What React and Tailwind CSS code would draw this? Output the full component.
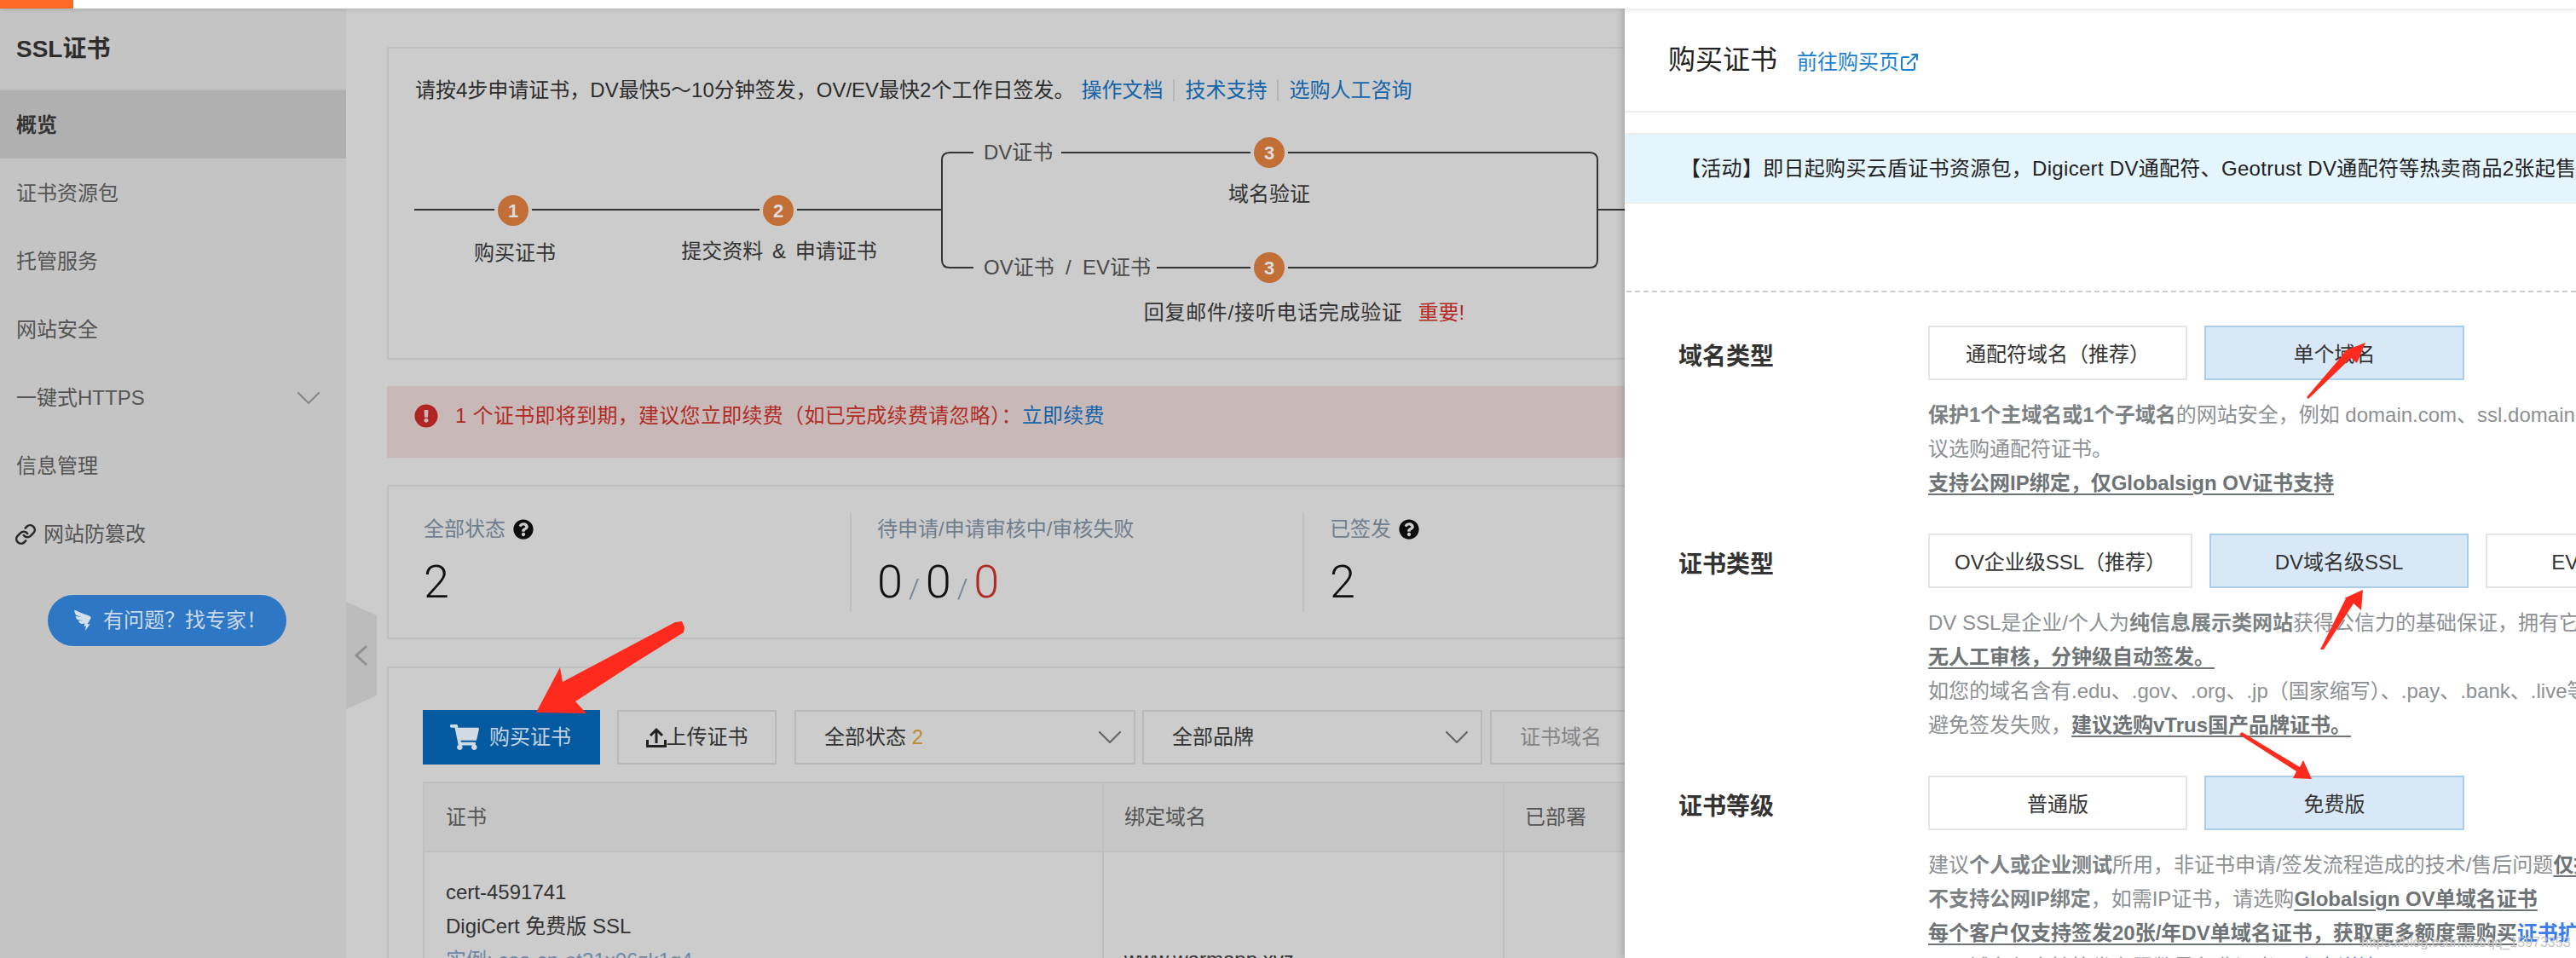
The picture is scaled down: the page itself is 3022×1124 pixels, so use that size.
import React from 'react'
import { ChevronDown, Link as LinkIcon, ExternalLink } from 'lucide-react'
import { FaShoppingCart, FaQuestionCircle, FaExclamationCircle } from 'react-icons/fa'
import { AiOutlineDingding } from 'react-icons/ai'

const font = { fontFamily: '"Liberation Sans", "Noto Sans CJK SC", sans-serif' }
const numFont = { fontFamily: 'Roboto, sans-serif', fontWeight: 300 }

const menu = ['证书资源包', '托管服务', '网站安全']

const Step = ({ n, x, y }) => (
  <div
    className="absolute w-[36px] h-[36px] -ml-[18px] -mt-[18px] rounded-full bg-[#c26f37] text-[#dedede] text-[22px] font-bold flex items-center justify-center ring-4 ring-[#cccccc]"
    style={{ left: x, top: y }}
  >
    {n}
  </div>
)

const Caption = ({ x, y, children }) => (
  <div
    className="absolute whitespace-nowrap text-[#333] leading-[32px] -translate-x-1/2 -translate-y-1/2"
    style={{ left: x, top: y }}
  >
    {children}
  </div>
)

const Option = ({ w = 'w-[304px]', on, children }) => (
  <div
    className={`${w} shrink-0 h-[64px] pt-[4px] border-2 flex items-center justify-center whitespace-nowrap text-[#333] ${
      on ? 'bg-[#d9e8f6] border-[#aacdea]' : 'bg-white border-[#e5e5e5]'
    }`}
  >
    {children}
  </div>
)

const Section = ({ label, options, children }) => (
  <div className="flex">
    <div className="w-[356px] shrink-0 pl-[63px] pt-[10px] h-[64px] flex items-center text-[28px] font-bold text-[#333]">{label}</div>
    <div>
      <div className="flex gap-[20px]">{options}</div>
      <div className="mt-[21px] -mb-[1px] leading-[40px] whitespace-nowrap text-[#8d9093]">{children}</div>
    </div>
  </div>
)

const B = ({ children }) => <span className="font-bold text-[#7c8184]">{children}</span>
const U = ({ children }) => <span className="font-bold text-[#6e7376] underline underline-offset-4">{children}</span>

export default function App() {
  return (
    <div className="relative w-full h-screen overflow-hidden bg-[#cccccc] text-[24px]" style={font}>
      <div className="relative z-30 h-[10px] bg-white shadow-[0_2px_5px_rgba(0,0,0,0.1)]">
        <div className="w-[86px] h-full bg-[#ff6a26]"></div>
      </div>

      <div className="flex h-[1114px]">
        <aside className="relative w-[406px] shrink-0 bg-[#c4c4c4]">
          <div className="h-[96px] pl-[19px] pt-[2px] flex items-center text-[28px] font-semibold text-[#2e2e2e] border-b-2 border-[#bdbdbd]">
            SSL证书
          </div>
          <div className="h-[80px] pl-[19px] pt-[2px] flex items-center bg-[#b0b0b0] font-bold text-[#333]">概览</div>
          {menu.map((m) => (
            <div key={m} className="h-[80px] pl-[19px] pt-[2px] flex items-center text-[#555]">{m}</div>
          ))}
          <div className="h-[80px] pl-[19px] pr-[20px] pt-[2px] flex items-center justify-between text-[#555]">
            一键式HTTPS
            <ChevronDown size={48} strokeWidth={1.1} color="#888888" />
          </div>
          <div className="h-[80px] pl-[19px] pt-[2px] flex items-center text-[#555]">信息管理</div>
          <div className="h-[80px] pl-[17px] pt-[2px] flex items-center text-[#555] gap-[8px]">
            <LinkIcon size={26} strokeWidth={2.4} color="#2a2a2a" />
            网站防篡改
          </div>
          <div className="ml-[56px] mt-[32px] w-[280px] h-[60px] rounded-full bg-[#2e77c4] text-[#c9d9ea] flex items-center pl-[26px] gap-[9px]">
            <AiOutlineDingding size={30} color="#d4e0ec" />
            有问题？找专家！
          </div>

          <svg className="absolute left-[406px] top-[696px]" width="36" height="130" viewBox="0 0 36 130">
            <polygon points="0,0 36,16 36,110 0,126" fill="#bcbcbc" />
            <path d="M24 52 L12 63 L24 74" fill="none" stroke="#8f8f8f" strokeWidth="3" />
          </svg>
        </aside>

        <main className="flex-1 min-w-0 overflow-hidden pl-[48px] pt-[45px]">
          <div className="h-[367px] border-2 border-[#bfbfbf] pl-[31px] pt-[33px]">
            <div className="flex items-center h-[32px] whitespace-nowrap text-[#2c2c2c]">
              请按4步申请证书，DV最快5～10分钟签发，OV/EV最快2个工作日签发。
              <span className="ml-[8px] text-[#1464a8]">操作文档</span>
              <span className="w-[2px] h-[26px] bg-[#b5b5b5] mx-[12px]"></span>
              <span className="text-[#1464a8]">技术支持</span>
              <span className="w-[2px] h-[26px] bg-[#b5b5b5] mx-[12px]"></span>
              <span className="text-[#1464a8]">选购人工咨询</span>
            </div>

            <div className="relative mt-[28px] -ml-[1px] h-[260px] w-[1450px]">
              <svg className="absolute left-0 top-0" width="1450" height="260" viewBox="0 0 1450 260" fill="none" stroke="#333333" strokeWidth="2">
                <path d="M0 96 H619" />
                <path d="M1388 96 H1450" />
                <path d="M628 29 H1379 Q1388 29 1388 38 V155 Q1388 164 1379 164 H628 Q619 164 619 155 V38 Q619 29 628 29 Z" />
              </svg>
              <Step n="1" x={116} y={97} />
              <Step n="2" x={427} y={97} />
              <Step n="3" x={1003} y={29} />
              <Step n="3" x={1003} y={164} />

              <div className="absolute left-[656px] top-[13px] w-[103px] pl-[12px] h-[32px] leading-[32px] bg-[#cccccc] text-[#4a4a4a] whitespace-nowrap">DV证书</div>
              <div className="absolute left-[656px] top-[148px] w-[215px] pl-[12px] h-[32px] leading-[32px] bg-[#cccccc] text-[#4a4a4a] whitespace-nowrap">OV证书&nbsp;&nbsp;/&nbsp;&nbsp;EV证书</div>

              <Caption x={118} y={147}>购买证书</Caption>
              <Caption x={428} y={145}>提交资料 <span className="mx-[4px]">&amp;</span> 申请证书</Caption>
              <Caption x={1044} y={217}>
                <span className="tracking-[0.7px]">回复邮件/接听电话完成验证</span><span className="ml-[18px] text-[#b32a25]">重要!</span>
              </Caption>
              <Caption x={1003} y={78}>域名验证</Caption>
            </div>
          </div>

          <div className="mt-[31px] h-[84px] bg-[#c8b9b8]">
            <div className="h-[70px] pl-[32px] flex items-center gap-[20px] whitespace-nowrap text-[#b02c27]">
              <FaExclamationCircle size={28} color="#b02522" />
              <span className="tracking-[0.3px]">
                1 个证书即将到期，建议您立即续费（如已完成续费请忽略）：
                <span className="text-[#1464a8]">立即续费</span>
              </span>
            </div>
          </div>

          <div className="mt-[32px] h-[181px] border-2 border-[#bfbfbf] flex py-[30px]">
            <div className="w-[541px] shrink-0 pl-[41px]">
              <div className="mt-[2px] flex items-center gap-[9px] text-[#6f7e8d] h-[36px]">
                全部状态 <FaQuestionCircle size={24} color="#0c0c0c" />
              </div>
              <div className="mt-[12px] text-[54px] leading-[64px] text-[#111]" style={numFont}>2</div>
            </div>
            <div className="w-[531px] shrink-0 border-l-2 border-[#bfbfbf] pl-[30px]">
              <div className="mt-[2px] flex items-center text-[#6f7e8d] h-[36px]">待申请/申请审核中/审核失败</div>
              <div className="mt-[12px] text-[54px] leading-[64px] text-[#111] flex items-baseline" style={numFont}>
                0<span className="text-[32px] text-[#6f7e8d] mx-[7px]">/</span>0<span className="text-[32px] text-[#6f7e8d] mx-[7px]">/</span>
                <span className="text-[#b02c27]">0</span>
              </div>
            </div>
            <div className="flex-1 border-l-2 border-[#bfbfbf] pl-[30px]">
              <div className="mt-[2px] flex items-center gap-[9px] text-[#6f7e8d] h-[36px]">
                已签发 <FaQuestionCircle size={24} color="#0c0c0c" />
              </div>
              <div className="mt-[12px] text-[54px] leading-[64px] text-[#111]" style={numFont}>2</div>
            </div>
          </div>

          <div className="mt-[32px] border-2 border-[#bfbfbf] pl-[40px] pt-[49px] h-[500px]">
            <div className="flex h-[64px] whitespace-nowrap">
              <div className="w-[208px] shrink-0 bg-[#055aa0] text-[#c3d3e2] flex items-center pl-[32px] gap-[12px]">
                <FaShoppingCart size={34} color="#d0dbe6" />
                购买证书
              </div>
              <div className="ml-[20px] w-[187px] shrink-0 border-2 border-[#b8b8b8] flex items-center justify-center text-[#333]">
                <svg width="24" height="24" viewBox="0 0 24 24" fill="none" stroke="#222" strokeWidth="3">
                  <path d="M12 19 V3 M5 10 L12 3 L19 10" />
                  <path d="M1.500 15 V22.500 H22.500 V15" />
                </svg>
                上传证书
              </div>
              <div className="ml-[21px] w-[400px] shrink-0 border-2 border-[#b8b8b8] flex items-center justify-between pl-[33px] pr-[4px] text-[#333]">
                <span>全部状态 <span className="text-[#c08a2e]">2</span></span>
                <ChevronDown size={48} strokeWidth={1.1} color="#666666" />
              </div>
              <div className="ml-[8px] w-[399px] shrink-0 border-2 border-[#b8b8b8] flex items-center justify-between pl-[33px] pr-[4px] text-[#333]">
                全部品牌
                <ChevronDown size={48} strokeWidth={1.1} color="#666666" />
              </div>
              <div className="ml-[9px] w-[400px] shrink-0 border-2 border-[#b8b8b8] flex items-center pl-[33px] text-[#858585]">证书域名</div>
            </div>

            <div className="mt-[20px] w-[1800px] border-2 border-[#bfbfbf]">
              <div className="flex h-[81px] bg-[#c6c6c6] border-b-2 border-[#bfbfbf] text-[#555]">
                <div className="w-[795px] shrink-0 pl-[25px] flex items-center">证书</div>
                <div className="w-[470px] shrink-0 pl-[24px] border-l-2 border-[#bfbfbf] flex items-center">绑定域名</div>
                <div className="flex-1 pl-[24px] border-l-2 border-[#bfbfbf] flex items-center">已部署</div>
              </div>
              <div className="flex h-[200px] leading-[40px] text-[#333]">
                <div className="w-[795px] shrink-0 pl-[25px] pt-[27px] whitespace-nowrap">
                  <div>cert-4591741</div>
                  <div>DigiCert 免费版 SSL</div>
                  <div className="text-[#6f87a6]">实例: cas-cn-ot31x06zk1g4</div>
                </div>
                <div className="w-[470px] shrink-0 pl-[24px] pt-[106px] border-l-2 border-[#bfbfbf]">www.warmapp.xyz</div>
                <div className="flex-1 border-l-2 border-[#bfbfbf]"></div>
              </div>
            </div>
          </div>
        </main>
      </div>

      <div className="absolute z-20 top-[10px] right-0 bottom-0 w-[1116px] bg-white shadow-[-3px_0_8px_rgba(0,0,0,0.18)] overflow-hidden">
        <div className="h-[122px] border-b-2 border-[#eeeeee] pl-[51px] flex items-center">
          <span className="text-[32px] text-[#222]">购买证书</span>
          <span className="ml-[23px] mt-[6px] flex items-center text-[#1b7fd0]">
            前往购买页
            <ExternalLink size={24} strokeWidth={2} color="#1b7fd0" />
          </span>
        </div>
        <div className="mt-[24px] h-[83px] bg-[#e4f5fd] border-y-2 border-[#eeeeee] pl-[65px] flex items-center whitespace-nowrap text-[#222] tracking-[0.3px]">
          【活动】即日起购买云盾证书资源包，Digicert DV通配符、Geotrust DV通配符等热卖商品2张起售
        </div>
        <div className="mt-[102px] ml-[2px] border-t-2 border-dashed border-[#cccccc]"></div>

        <div className="mt-[39px] flex flex-col gap-[40px]">
          <Section
            label="域名类型"
            options={
              <>
                <Option>通配符域名（推荐）</Option>
                <Option w="w-[305px]" on>单个域名</Option>
              </>
            }
          >
            <div><B>保护1个主域名或1个子域名</B>的网站安全，例如 domain.com、ssl.domain.com</div>
            <div>议选购通配符证书。</div>
            <div><U>支持公网IP绑定，仅Globalsign OV证书支持</U></div>
          </Section>

          <Section
            label="证书类型"
            options={
              <>
                <Option w="w-[310px]">OV企业级SSL（推荐）</Option>
                <Option on>DV域名级SSL</Option>
                <Option>EV增强级SSL</Option>
              </>
            }
          >
            <div>DV SSL是企业/个人为<B>纯信息展示类网站</B>获得公信力的基础保证，拥有它</div>
            <div><U>无人工审核，分钟级自动签发。</U></div>
            <div>如您的域名含有.edu、.gov、.org、.jp（国家缩写）、.pay、.bank、.live等</div>
            <div>避免签发失败，<U>建议选购vTrus国产品牌证书。</U></div>
          </Section>

          <Section
            label="证书等级"
            options={
              <>
                <Option>普通版</Option>
                <Option w="w-[305px]" on>免费版</Option>
              </>
            }
          >
            <div>建议<B>个人或企业测试</B>所用，非证书申请/签发流程造成的技术/售后问题<U>仅提供</U></div>
            <div><B>不支持公网IP绑定</B>，如需IP证书，请选购<U>Globalsign OV单域名证书</U></div>
            <div><U>每个客户仅支持签发20张/年DV单域名证书，获取更多额度需购买</U><span className="font-bold text-[#3b7dea]">证书扩容包</span></div>
            <div>同一域名仅支持签发有限数量免费证书，<span className="text-[#3b7dea]">点击详情</span></div>
          </Section>
        </div>

        <div className="absolute left-[864px] top-[1086px] text-[16px] leading-[20px] text-[#c4c4c4] whitespace-nowrap">https://blog.csdn.net/qq_15973353</div>
      </div>

      <svg className="absolute left-0 top-0 z-40 pointer-events-none" width="3022" height="1124" viewBox="0 0 3022 1124" fill="#ff2a1e">
        <polygon points="629,836 657,783 660,800 792,730 800,729 803,736 802,742 741,780 675,823 688,837" />
        <polygon points="2775,402 2765,426 2758,420 2708,468 2706,466 2747,418 2752,411" />
        <polygon points="2772,692 2770,716 2761,708 2726,762 2722,762 2752,702 2750,702" />
        <polygon points="2627,862 2630,859 2698,900 2702,892 2712,914 2690,913 2694,905" />
      </svg>
    </div>
  )
}
